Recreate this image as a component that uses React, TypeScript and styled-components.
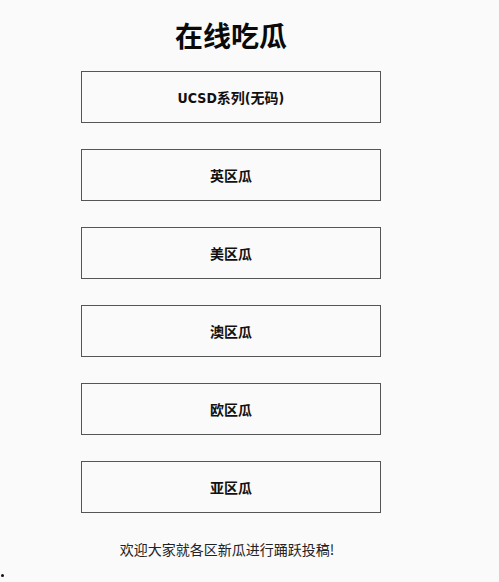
import React from "react";
import styled, { createGlobalStyle } from "styled-components";

const GlobalStyle = createGlobalStyle`
  html, body {
    margin: 0;
    padding: 0;
    background: #fafafa;
  }
  body {
    font-family: "DejaVu Sans", "Noto Sans CJK SC", sans-serif;
    color: #111;
  }
`;

const regions = ["UCSD系列(无码)", "英区瓜", "美区瓜", "澳区瓜", "欧区瓜", "亚区瓜"];

const App: React.FC = () => {
  return (
    <>
      <GlobalStyle />
      <Page>
        <Title>在线吃瓜</Title>
        <Menu>
          {regions.map((name) => (
            <RegionButton key={name}>{name}</RegionButton>
          ))}
        </Menu>
        <Footer>欢迎大家就各区新瓜进行踊跃投稿!</Footer>
      </Page>
      <Dot />
    </>
  );
};

const Page = styled.div`
  width: 462px;
  display: flex;
  flex-direction: column;
  align-items: center;
`;

const Title = styled.h1`
  margin: 18px 0 19px;
  font-family: "Noto Sans CJK SC", sans-serif;
  font-size: 28px;
  line-height: 34px;
  font-weight: 700;
  color: #0a0a0a;
`;

const Menu = styled.div`
  display: flex;
  flex-direction: column;
  gap: 26px;
`;

const RegionButton = styled.div`
  box-sizing: border-box;
  width: 300px;
  height: 52px;
  border: 1px solid #555;
  display: flex;
  align-items: center;
  justify-content: center;
  font-family: "DejaVu Sans Condensed", "DejaVu Sans", "Noto Sans CJK SC", sans-serif;
  font-size: 14px;
  font-weight: 700;
  color: #111;
`;

const Footer = styled.p`
  margin: 26px 0 0;
  font-family: "Noto Sans CJK SC", sans-serif;
  font-size: 14px;
  line-height: 20px;
  color: #222;
  transform: translateX(-4px);
`;

const Dot = styled.div`
  width: 3px;
  height: 3px;
  margin: 15px 0 0 1px;
  border-radius: 50%;
  background: #111;
`;

export default App;
